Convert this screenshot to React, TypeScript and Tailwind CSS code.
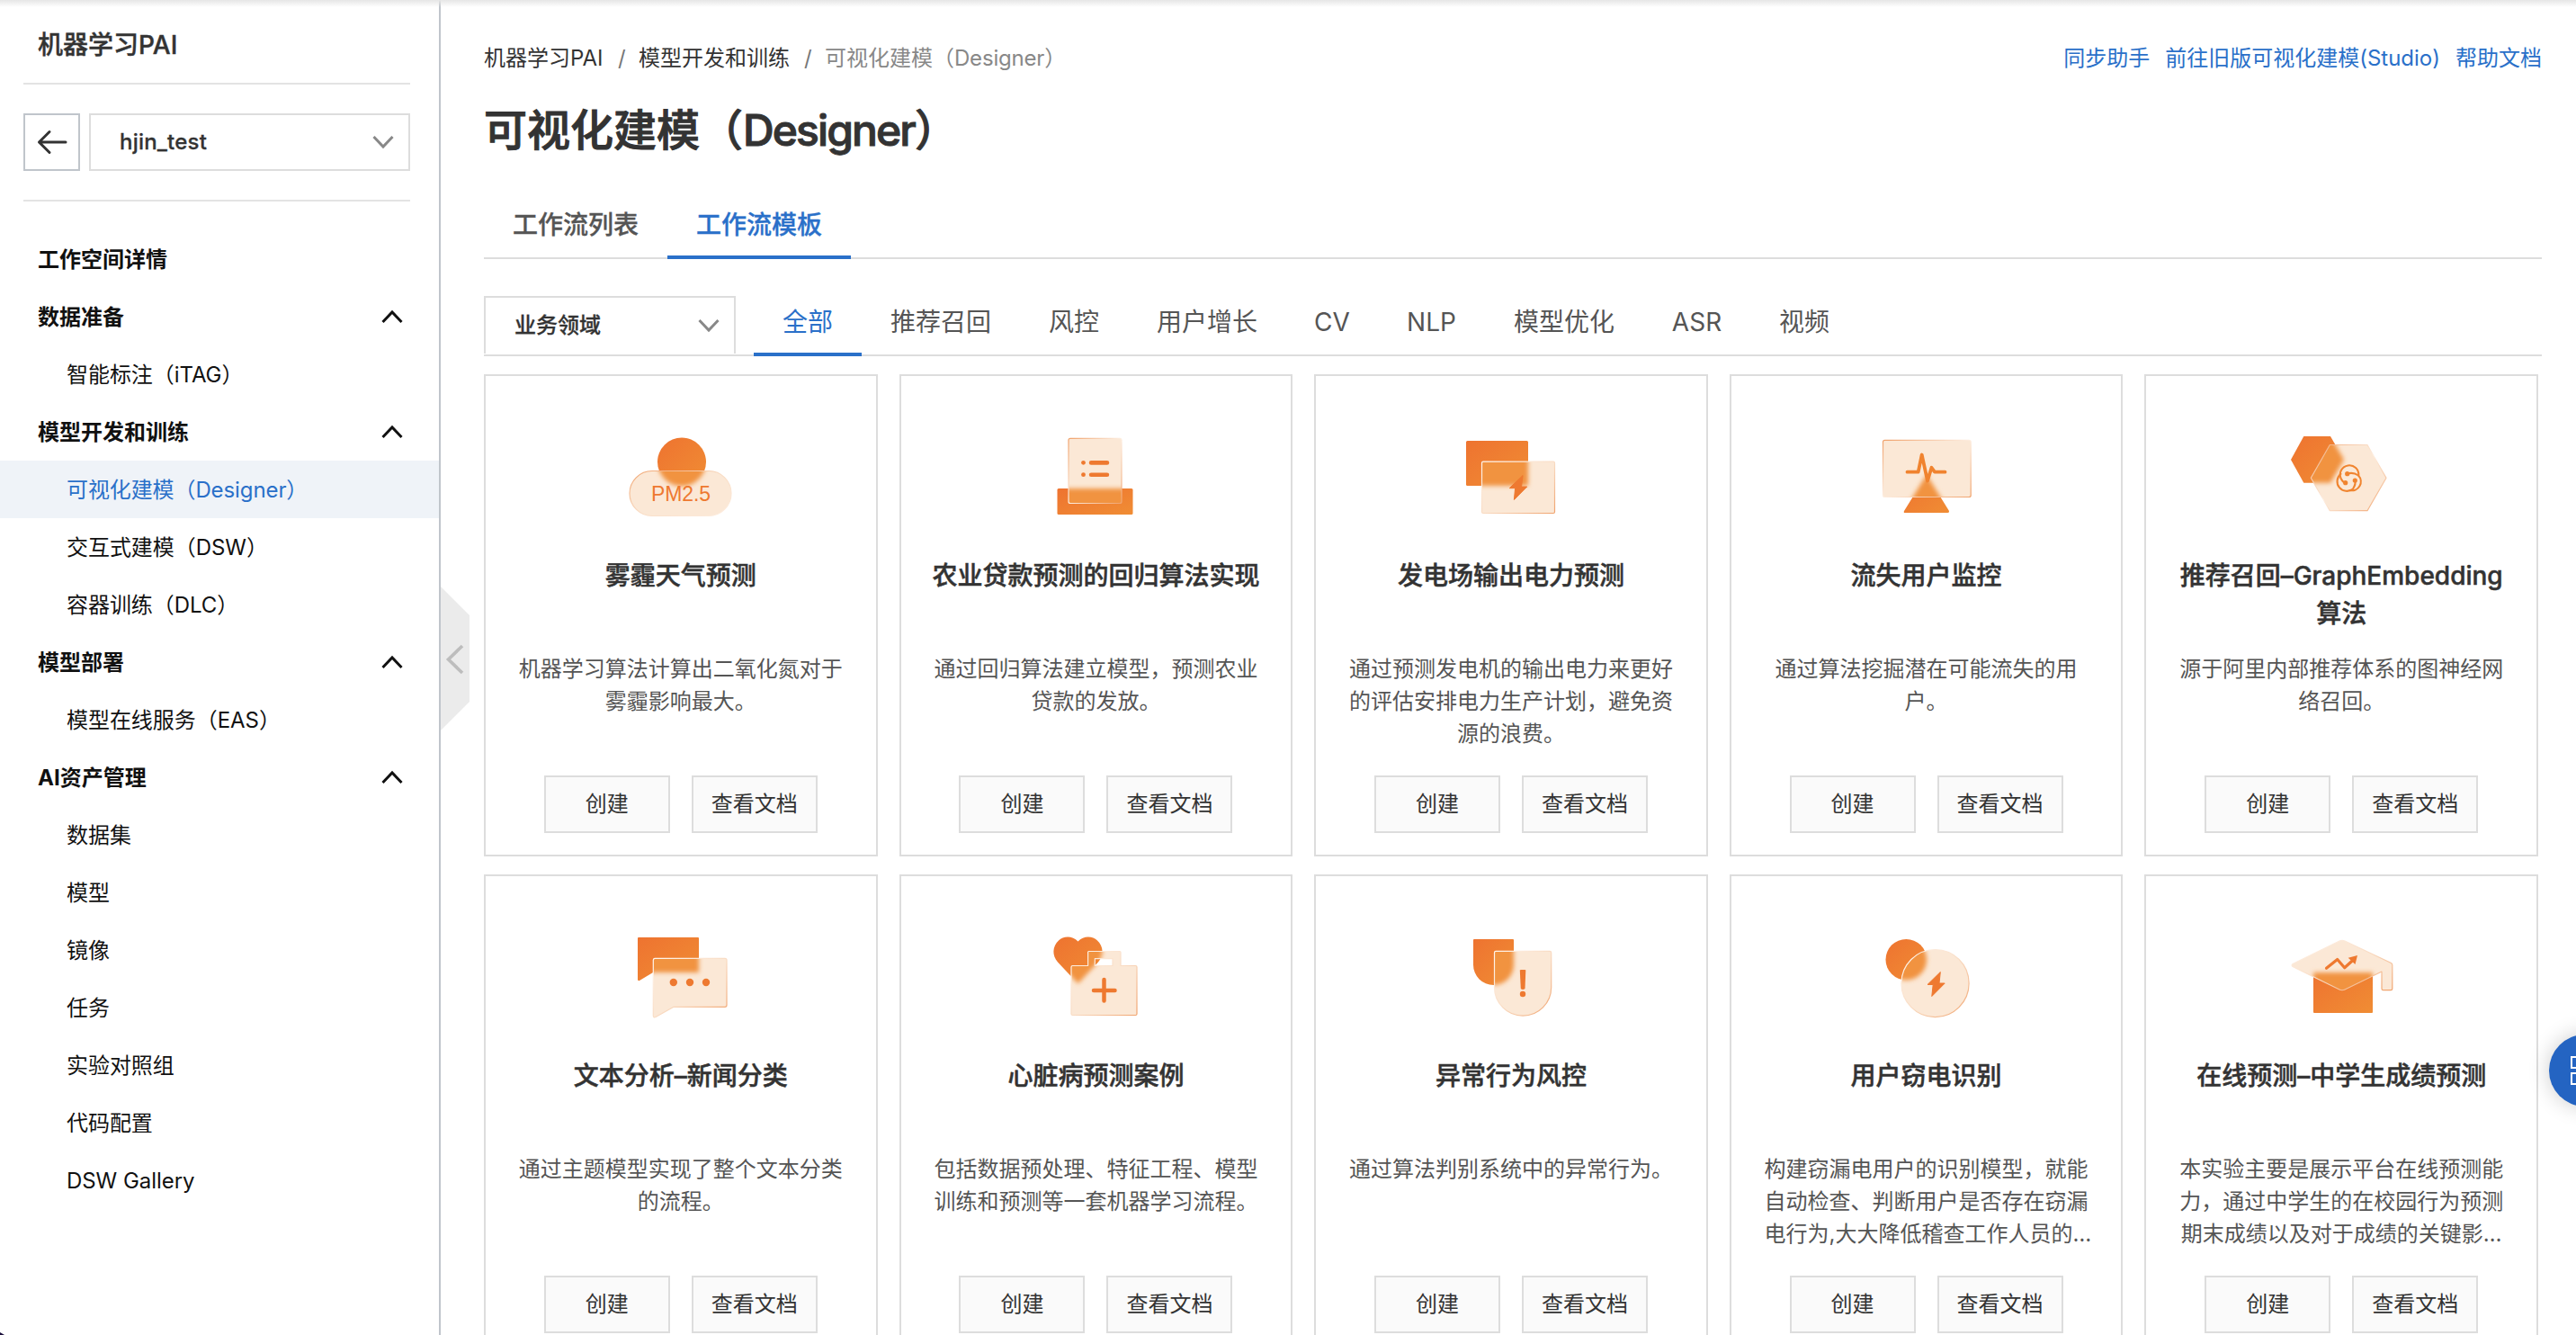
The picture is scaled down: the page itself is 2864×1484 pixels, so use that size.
import type { ReactNode } from 'react';

const BASE =
  "font-['Inter','Noto_Sans_CJK_SC',sans-serif]";

/* ---------- small glyphs ---------- */

function Chevron({ dir, className }: { dir: 'up' | 'down'; className: string }) {
  return (
    <svg width="24" height="16" viewBox="0 0 24 16" fill="none" className={className}>
      <path
        d={dir === 'up' ? 'M1.5 14L12 3L22.5 14' : 'M1.5 2L12 13L22.5 2'}
        stroke="currentColor"
        strokeWidth="3"
      />
    </svg>
  );
}

/* ---------- template illustrations ---------- */

type GlassProps = {
  id: string;
  back: ReactNode;
  front: string;
  children: ReactNode;
  edge?: 'tl' | 'br' | 'both';
};

function Glass({ id, back, front, children, edge = 'br' }: GlassProps) {
  const strong = '#f0a26c';
  const weak = '#fdeee1';
  return (
    <svg width="128" height="128" viewBox="0 0 128 128" className="shrink-0">
      <defs>
        <linearGradient id={`${id}-g`} x1="0" y1="0" x2="1" y2="1">
          <stop offset="0" stopColor="#ee7330" />
          <stop offset="1" stopColor="#f08d34" />
        </linearGradient>
        <linearGradient id={`${id}-s`} x1="0" y1="0" x2="1" y2="1">
          <stop offset="0" stopColor={edge === 'br' ? '#fff6ee' : strong} />
          <stop offset="0.5" stopColor={edge === 'both' ? weak : '#f9dcc4'} />
          <stop offset="1" stopColor={edge === 'tl' ? weak : strong} />
        </linearGradient>
        <filter id={`${id}-b`} x="-30%" y="-30%" width="160%" height="160%">
          <feGaussianBlur stdDeviation="2.6" />
        </filter>
        <clipPath id={`${id}-c`}>
          <path d={front} clipRule="evenodd" />
        </clipPath>
      </defs>
      <g fill={`url(#${id}-g)`}>{back}</g>
      <path d={front} fill="#fbe8d6" fillRule="evenodd" />
      <g clipPath={`url(#${id}-c)`}>
        <g fill="#f1933f" filter={`url(#${id}-b)`}>
          {back}
        </g>
      </g>
      <path d={front} fill="none" stroke={`url(#${id}-s)`} strokeWidth="1.2" strokeLinejoin="round" />
      {children}
    </svg>
  );
}

const INK = '#ee7930';

function HazeIcon() {
  return (
    <Glass
      id="haze"
      edge="tl"
      back={<circle cx="65" cy="49.5" r="27" />}
      front="M32 59.5H95A25 25 0 0 1 95 109.5H32A25 25 0 0 1 32 59.5Z"
    >
      <text
        x="31"
        y="92.5"
        fontSize="23"
        textLength="66"
        fill={INK}
        className="font-['Liberation_Sans',sans-serif]"
      >
        PM2.5
      </text>
    </Glass>
  );
}

function LoanIcon() {
  return (
    <Glass
      id="loan"
      edge="both"
      back={<rect x="21.5" y="79" width="84" height="29" rx="1.5" />}
      front="M36 23.3H91a2 2 0 0 1 2 2V93.5a2 2 0 0 1 -2 2H36a2 2 0 0 1 -2 -2V25.3a2 2 0 0 1 2 -2Z"
    >
      <g fill={INK}>
        <circle cx="50.5" cy="50.3" r="2.4" />
        <circle cx="50.5" cy="63.7" r="2.4" />
        <rect x="56.8" y="48" width="22.4" height="4.7" rx="2.3" />
        <rect x="56.8" y="61.4" width="22.4" height="4.7" rx="2.3" />
      </g>
    </Glass>
  );
}

function PowerIcon() {
  return (
    <Glass
      id="power"
      back={<rect x="14" y="26" width="69" height="50" rx="1.5" />}
      front="M33 49.2H111a1.5 1.5 0 0 1 1.5 1.5V105a1.5 1.5 0 0 1 -1.5 1.5H33a1.5 1.5 0 0 1 -1.5 -1.5V50.7a1.5 1.5 0 0 1 1.5 -1.5Z"
    >
      <path
        d="M77 64.5L62.3 78.6H68.6L67.4 91.5L81.7 77H75.6Z"
        fill={INK}
        stroke={INK}
        strokeWidth="1"
        strokeLinejoin="round"
      />
    </Glass>
  );
}

function MonitorIcon() {
  return (
    <Glass
      id="monitor"
      edge="both"
      back={<path d="M62.5 66Q64 63.5 65.5 66L89 104Q89.5 106 87.5 106H40Q38 106 39 104Z" />}
      front="M17.5 25.3H111.2a2 2 0 0 1 2 2V86.5a2 2 0 0 1 -2 2H17.5a2 2 0 0 1 -2 -2V27.3a2 2 0 0 1 2 -2Z"
    >
      <path
        d="M42.5 60.7H54.7L58.7 41.5L65 70.5L69.5 55.8L73 60.7H84.5"
        fill="none"
        stroke="#f0832f"
        strokeWidth="3.8"
        strokeLinecap="round"
        strokeLinejoin="round"
      />
    </Glass>
  );
}

function GraphIcon() {
  return (
    <Glass
      id="graph"
      edge="both"
      back={<path d="M8 47L22.3 21H52L67 47L52 72.7H22.3Z" />}
      front="M30.3 67.3L51.3 30.5H93L114 67.3L93 103.7H51.3Z"
    >
      <g fill="none" stroke="#f0842f" strokeWidth="2.1" strokeLinecap="round">
        <path d="M83.3 64.5A10.3 10.3 0 1 0 63.5 67.5Q65.5 72 68.7 72.7" />
        <path d="M63.5 62.8A9.9 9.9 0 1 0 77 79.5Q80.5 74 79.3 70" />
        <path d="M70.7 62.7Q77 60.5 83 64.5A9.9 9.9 0 0 1 73.5 81" />
      </g>
      <g fill="#f0842f">
        <circle cx="70.7" cy="62.7" r="2.6" />
        <circle cx="79.3" cy="70" r="2.6" />
        <circle cx="68.7" cy="72.7" r="2.6" />
      </g>
    </Glass>
  );
}

function NewsIcon() {
  return (
    <Glass
      id="news"
      back={<path d="M17 22H83a1 1 0 0 1 1 1V61H33L18 70Q16 70.5 16 69V23a1 1 0 0 1 1 -1Z" />}
      front="M35 45.3H113a2 2 0 0 1 2 2V97.3a2 2 0 0 1 -2 2H56L36 110.5Q33.3 111.5 33.3 109V47.3a2 2 0 0 1 1.7 -2Z"
    >
      <g fill={INK}>
        <circle cx="55.8" cy="72" r="4.2" />
        <circle cx="74" cy="72" r="4.2" />
        <circle cx="92" cy="72" r="4.2" />
      </g>
    </Glass>
  );
}

function HeartIcon() {
  return (
    <Glass
      id="heart"
      back={
        <path d="M44.5 26.5C51 19.5 61 20.5 66 25.5C73 32 73.5 42 67 49.5L44.5 73.5L22 49.5C15.5 42 16 32 23 25.5C28 20.5 38 19.5 44.5 26.5Z" />
      }
      front="M38.5 53.5H55.6V38.5a1 1 0 0 1 1 -1H91a1 1 0 0 1 1 1V53.5H108.5a1.5 1.5 0 0 1 1.5 1.5V107a1.5 1.5 0 0 1 -1.5 1.5H38.5a1.5 1.5 0 0 1 -1.5 -1.5V55a1.5 1.5 0 0 1 1.5 -1.5ZM63.3 45.7V53.5H83V45.7Z"
    >
      <path d="M73.5 69V92.5M62 81H85.5" stroke={INK} strokeWidth="4.5" strokeLinecap="round" />
    </Glass>
  );
}

function RiskIcon() {
  return (
    <Glass
      id="risk"
      back={<path d="M23 24H66a1 1 0 0 1 1 1V52.5A22.5 22.5 0 0 1 22 52.5V25a1 1 0 0 1 1 -1Z" />}
      front="M47 37.4H107a1.7 1.7 0 0 1 1.7 1.7V77.5A31.6 31.6 0 0 1 45.5 77.5V39a1.6 1.6 0 0 1 1.5 -1.6Z"
    >
      <g fill={INK}>
        <path d="M73.8 58.7Q74 58 75 58H79.3Q80.3 58 80.3 58.7L79.5 79Q77 81 74.8 79Z" />
        <circle cx="77" cy="85" r="3.2" />
      </g>
    </Glass>
  );
}

function TheftIcon() {
  return (
    <Glass
      id="theft"
      back={<circle cx="41.3" cy="46.7" r="22.8" />}
      front="M73.5 35.5A37.6 37.6 0 0 1 73.5 110.7A37.6 37.6 0 0 1 73.5 35.5Z"
    >
      <path
        d="M79.3 60.5L65 74.5H71.2L69.8 87.5L84.2 73H78Z"
        fill={INK}
        stroke={INK}
        strokeWidth="1"
        strokeLinejoin="round"
      />
    </Glass>
  );
}

function GradeIcon() {
  return (
    <Glass
      id="grade"
      back={<rect x="33" y="61" width="66" height="45" rx="1" />}
      front="M10 51.5L62 26Q65 24.6 68 26L119.5 50.5Q120.8 51 120.8 53V79a1.7 1.7 0 0 1 -1.7 1.7H110.7a1.7 1.7 0 0 1 -1.7 -1.7V60L68 80Q65 81.5 62 80L10 54.5Q8.3 53 10 51.5Z"
    >
      <path
        d="M47.5 56.3L59.7 46.5L67.7 55.7L76 48.3"
        fill="none"
        stroke={INK}
        strokeWidth="3.2"
        strokeLinecap="round"
        strokeLinejoin="round"
      />
      <path d="M82 42L71.7 44.7L79.5 52Z" fill={INK} />
    </Glass>
  );
}

/* ---------- data ---------- */

type NavItem = { label: ReactNode; kind: 'head' | 'group' | 'item'; active?: boolean };

const NAV: NavItem[] = [
  { label: '工作空间详情', kind: 'head' },
  { label: '数据准备', kind: 'group' },
  { label: '智能标注（iTAG）', kind: 'item' },
  { label: '模型开发和训练', kind: 'group' },
  { label: '可视化建模（Designer）', kind: 'item', active: true },
  { label: '交互式建模（DSW）', kind: 'item' },
  { label: '容器训练（DLC）', kind: 'item' },
  { label: '模型部署', kind: 'group' },
  { label: '模型在线服务（EAS）', kind: 'item' },
  { label: 'AI资产管理', kind: 'group' },
  { label: '数据集', kind: 'item' },
  { label: '模型', kind: 'item' },
  { label: '镜像', kind: 'item' },
  { label: '任务', kind: 'item' },
  { label: '实验对照组', kind: 'item' },
  { label: '代码配置', kind: 'item' },
  { label: 'DSW Gallery', kind: 'item' },
];

const CATEGORIES = [
  { label: '全部', width: 'w-[120px]' },
  { label: '推荐召回', width: 'w-[176px]' },
  { label: '风控', width: 'w-[120px]' },
  { label: '用户增长', width: 'w-[176px]' },
  { label: 'CV', width: 'w-[102px]' },
  { label: 'NLP', width: 'w-[119px]' },
  { label: '模型优化', width: 'w-[176px]' },
  { label: 'ASR', width: 'w-[119px]' },
  { label: '视频', width: 'w-[120px]' },
];

type Template = { icon: ReactNode; title: string[]; desc: string[] };

const TEMPLATES: Template[] = [
  { icon: <HazeIcon />, title: ['雾霾天气预测'], desc: ['机器学习算法计算出二氧化氮对于', '雾霾影响最大。'] },
  { icon: <LoanIcon />, title: ['农业贷款预测的回归算法实现'], desc: ['通过回归算法建立模型，预测农业', '贷款的发放。'] },
  { icon: <PowerIcon />, title: ['发电场输出电力预测'], desc: ['通过预测发电机的输出电力来更好', '的评估安排电力生产计划，避免资', '源的浪费。'] },
  { icon: <MonitorIcon />, title: ['流失用户监控'], desc: ['通过算法挖掘潜在可能流失的用', '户。'] },
  { icon: <GraphIcon />, title: ['推荐召回–GraphEmbedding', '算法'], desc: ['源于阿里内部推荐体系的图神经网', '络召回。'] },
  { icon: <NewsIcon />, title: ['文本分析–新闻分类'], desc: ['通过主题模型实现了整个文本分类', '的流程。'] },
  { icon: <HeartIcon />, title: ['心脏病预测案例'], desc: ['包括数据预处理、特征工程、模型', '训练和预测等一套机器学习流程。'] },
  { icon: <RiskIcon />, title: ['异常行为风控'], desc: ['通过算法判别系统中的异常行为。'] },
  { icon: <TheftIcon />, title: ['用户窃电识别'], desc: ['构建窃漏电用户的识别模型，就能', '自动检查、判断用户是否存在窃漏', '电行为,大大降低稽查工作人员的…'] },
  { icon: <GradeIcon />, title: ['在线预测–中学生成绩预测'], desc: ['本实验主要是展示平台在线预测能', '力，通过中学生的在校园行为预测', '期末成绩以及对于成绩的关键影…'] },
];

/* ---------- sections ---------- */

function Sidebar() {
  return (
    <aside className="flex h-full w-[490px] shrink-0 flex-col border-r-2 border-[#c0c5cb] bg-white">
      <div className="mx-[26px] mr-8 flex h-[94px] items-center border-b-2 border-[#e3e3e3] pl-4 pt-2 text-[28px] font-medium text-[#333] [-webkit-text-stroke:0.4px]">
        机器学习PAI
      </div>
      <div className="ml-[26px] mr-8 flex h-[130px] items-center gap-[10px] border-b-2 border-[#e3e3e3]">
        <button className="flex h-16 w-[63px] items-center justify-center border-2 border-[#c0c5cb]">
          <svg width="34" height="28" viewBox="0 0 34 28" fill="none" stroke="#333" strokeWidth="3" strokeLinecap="round" strokeLinejoin="round">
            <path d="M14 2.5L2.5 14L14 25.5M2.5 14H32" />
          </svg>
        </button>
        <div className="flex h-16 flex-1 items-center justify-between border-2 border-[#ddd] pl-8 pr-4 text-2xl font-medium tracking-[0.2px] text-[#333] [-webkit-text-stroke:0.3px]">
          <span>hjin_test</span>
          <Chevron dir="down" className="text-[#888]" />
        </div>
      </div>
      <nav className="mt-8 flex flex-col">
        {NAV.map((n, i) => (
          <div
            key={i}
            className={
              n.kind === 'item'
                ? n.active
                  ? 'flex h-16 items-center bg-[#eff3f8] pl-[74px] pt-0.5 text-2xl tracking-[-0.1px] text-[#2a70c9]'
                  : 'flex h-16 items-center pl-[74px] pt-0.5 text-2xl tracking-[-0.05px] text-[#111]'
                : 'flex h-16 items-center justify-between pl-[42px] pr-10 text-2xl font-bold text-[#111]'
            }
          >
            <span className={n.kind === 'item' ? '' : 'pt-0.5'}>{n.label}</span>
            {n.kind === 'group' && <Chevron dir="up" className="text-[#111]" />}
          </div>
        ))}
      </nav>
    </aside>
  );
}

function TemplateCard({ icon, title, desc }: Template) {
  return (
    <article className="flex h-[536px] flex-col items-center border-2 border-[#ddd] bg-white pt-[46px]">
      {icon}
      <h3 className="mt-[27px] h-[107px] text-center text-[28px] font-medium leading-[42px] text-[#333] [-webkit-text-stroke:0.5px]">
        {title.map((t) => (
          <div key={t} className="whitespace-nowrap">{t}</div>
        ))}
      </h3>
      <div className="h-[136px] w-[360px] text-center text-2xl leading-9 text-[#555]">
        {desc.map((t) => (
          <div key={t} className="whitespace-nowrap">{t}</div>
        ))}
      </div>
      <div className="flex gap-6">
        <button className="h-16 w-[140px] border-2 border-[#ddd] bg-[#fafafa] text-2xl text-[#333]">创建</button>
        <button className="h-16 w-[140px] border-2 border-[#ddd] bg-[#fafafa] text-2xl text-[#333]">查看文档</button>
      </div>
    </article>
  );
}

function Main() {
  return (
    <main className="flex h-full min-w-0 flex-1 flex-col pl-12 pr-[38px]">
      <header className="flex h-[100px] shrink-0 items-center justify-between pt-[30px] text-2xl">
        <div className="flex items-center whitespace-nowrap text-[#333]">
          <span className="w-[149px]">机器学习PAI</span>
          <span className="w-[23px] text-[#777]">/</span>
          <span className="w-[184px]">模型开发和训练</span>
          <span className="w-[23px] text-[#777]">/</span>
          <span className="text-[#888]">
            可视化建模（<span className="tracking-[-0.2px]">Designer</span>）
          </span>
        </div>
        <div className="flex items-center gap-[17px] whitespace-nowrap text-[#2a70c9]">
          <span>同步助手</span>
          <span>前往旧版可视化建模(Studio)</span>
          <span>帮助文档</span>
        </div>
      </header>
      <h1 className="flex h-[92px] shrink-0 items-center whitespace-nowrap pb-0.5 text-5xl font-medium text-[#333] [-webkit-text-stroke:1px]">
        <span>
          可视化建模（<span className="tracking-[-1.9px]">Designer</span>）
        </span>
      </h1>
      <div className="mt-5 flex h-[76px] shrink-0 border-b-2 border-[#ddd] text-[28px] font-medium [-webkit-text-stroke:0.3px]">
        <div className="flex h-[76px] w-[204px] items-center justify-center text-[#555]">工作流列表</div>
        <div className="flex h-[76px] w-[204px] items-center justify-center border-b-4 border-[#2a70c9] pt-1 text-[#2a70c9]">
          工作流模板
        </div>
      </div>
      <div className="mt-[41px] flex h-[67px] shrink-0 gap-5 border-b-2 border-[#ddd]">
        <div className="flex h-16 w-[280px] items-center justify-between border-2 border-b-0 border-[#ddd] pl-8 pr-4 text-2xl font-medium text-[#333] [-webkit-text-stroke:0.3px]">
          <span>业务领域</span>
          <Chevron dir="down" className="text-[#888]" />
        </div>
        <div className="flex h-[67px] text-[28px] text-[#555]">
          {CATEGORIES.map((c, i) => (
            <div key={c.label} className={c.width}>
              <div
                className={
                  i === 0
                    ? 'flex h-[67px] items-center justify-center border-b-4 border-[#2a70c9] pb-1.5 text-[#2a70c9]'
                    : 'flex h-[67px] items-center justify-center pb-2.5'
                }
              >
                {c.label}
              </div>
            </div>
          ))}
        </div>
      </div>
      <section className="mr-1 mt-5 grid shrink-0 grid-cols-5 gap-x-6 gap-y-5">
        {TEMPLATES.map((t) => (
          <TemplateCard key={t.title[0]} {...t} />
        ))}
      </section>
    </main>
  );
}

export default function App() {
  return (
    <div className={`${BASE} relative flex h-[1484px] w-[2864px] overflow-hidden bg-white`}>
      <Sidebar />
      <Main />
      <div className="pointer-events-none absolute inset-x-0 top-0 h-2 bg-gradient-to-b from-[#e6e6e6] to-transparent" />
      <svg width="32" height="160" viewBox="0 0 32 160" className="absolute left-[490px] top-[652px]">
        <path d="M0 0L32 32V128L0 160Z" fill="#ebebeb" />
        <path d="M24 66L8.5 81L24 96" fill="none" stroke="#bdbdbd" strokeWidth="3.6" />
      </svg>
      <div className="absolute left-[2834px] top-[1150px] flex h-20 w-20 items-center rounded-full bg-[#2464c2] pl-6 shadow-[0_0_24px_rgba(0,0,0,0.2)]">
        <div className="grid grid-cols-2 gap-1">
          <div className="h-3.5 w-3.5 border-2 border-white" />
          <div className="h-3.5 w-3.5 border-2 border-white" />
          <div className="h-3.5 w-3.5 border-2 border-white" />
          <div className="h-3.5 w-3.5 border-2 border-white" />
        </div>
      </div>
      <svg width="5" height="3" viewBox="0 0 5 3" className="absolute bottom-0 left-0">
        <path d="M0 0L5 3H0Z" fill="#1b0f3b" />
      </svg>
    </div>
  );
}
